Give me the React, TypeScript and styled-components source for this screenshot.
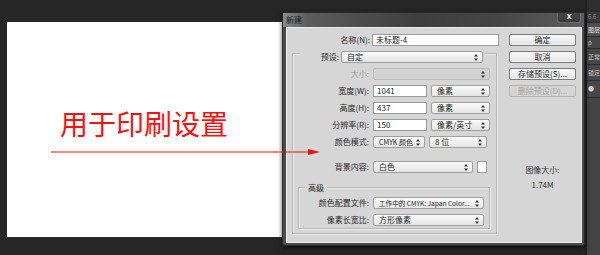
import React from "react";
import styled, { createGlobalStyle } from "styled-components";

const GlobalStyle = createGlobalStyle`
  html, body {
    margin: 0;
    padding: 0;
    background: #262626;
  }
  body {
    font-family: "Noto Sans CJK SC", "DejaVu Sans", sans-serif;
  }
`;

const Screen = styled.div`
  position: relative;
  width: 600px;
  height: 255px;
  display: flex;
  overflow: hidden;
  background: #262626;
`;

const Workspace = styled.div`
  flex: 1;
  padding: 22px 0 0 7px;
`;

const Canvas = styled.div`
  width: 300px;
  height: 215px;
  box-sizing: border-box;
  background: #fff;
  padding: 86px 0 0 53px;
`;

const Caption = styled.div`
  font-size: 28px;
  line-height: 30px;
  color: #ff1010;
  font-weight: 400;
  white-space: nowrap;
`;

const Arrow = styled.svg`
  position: absolute;
  left: 51px;
  top: 148px;
`;

const Dialog = styled.div`
  position: absolute;
  left: 282px;
  top: 12px;
  width: 303px;
  height: 234px;
  box-sizing: border-box;
  display: flex;
  flex-direction: column;
  background: #4b4b4b;
  border: 1px solid #2a2a2a;
  border-radius: 3px 3px 2px 2px;
  padding: 0 2px 2px 3px;
  box-shadow: 0 2px 5px rgba(0, 0, 0, 0.6);
`;

const TitleBar = styled.div`
  height: 14px;
  display: flex;
  align-items: flex-start;
  justify-content: space-between;
  margin: 0 -2px 0 -3px;
  padding-left: 3px;
  background: linear-gradient(90deg, #8a8a8a 0%, #5c5c5c 8%, #3e3e3e 45%, #454545 70%, #5e5e5e 100%);
`;

const TitleText = styled.span`
  font-size: 8px;
  line-height: 12px;
  margin-top: 1px;
  color: #1c1c1c;
`;

const CloseButton = styled.div`
  width: 24px;
  height: 10px;
  margin-right: 3px;
  box-sizing: border-box;
  border: 1px solid #6a6a6a;
  border-top: none;
  border-radius: 0 0 3px 3px;
  background: linear-gradient(#474747, #3a3a3a);
  color: #e8e8e8;
  font-family: "DejaVu Sans", sans-serif;
  font-weight: bold;
  font-size: 8px;
  line-height: 8px;
  text-align: center;
`;

const Body = styled.div`
  flex: 1;
  display: flex;
  box-sizing: border-box;
  padding: 6px 0 0 5px;
  background: #d6d6d6;
  border: 1px solid #ededed;
`;

const FormColumn = styled.div`
  width: 207px;
  display: flex;
  flex-direction: column;
`;

const SideColumn = styled.div`
  width: 67px;
  margin-left: 10px;
  display: flex;
  flex-direction: column;
  gap: 5px;
`;

const FieldRow = styled.div<{ $label: number; $gap?: number }>`
  display: grid;
  grid-template-columns: ${(p) => p.$label}px 1fr;
  column-gap: ${(p) => p.$gap ?? 4}px;
  align-items: center;
`;

const Label = styled.span<{ $disabled?: boolean }>`
  font-size: 8px;
  line-height: 12px;
  text-align: right;
  white-space: nowrap;
  color: ${(p) => (p.$disabled ? "#9c9c9c" : "#2a2a2a")};
`;

const Controls = styled.div`
  display: flex;
  gap: 4px;
  align-items: center;
`;

const TextInput = styled.div<{ $w: number }>`
  width: ${(p) => p.$w}px;
  height: 12px;
  box-sizing: border-box;
  background: #fff;
  border: 1px solid #9a9a9a;
  padding-left: 3px;
  font-size: 8px;
  line-height: 10px;
  color: #1e1e1e;
`;

const SelectBox = styled.div<{ $w: number; $disabled?: boolean; $fs?: number }>`
  position: relative;
  width: ${(p) => p.$w}px;
  height: 12px;
  box-sizing: border-box;
  border: 1px solid ${(p) => (p.$disabled ? "#bcbcbc" : "#9e9e9e")};
  border-radius: 2px;
  background: ${(p) =>
    p.$disabled ? "#d2d2d2" : "linear-gradient(#fbfbfb, #e4e4e4)"};
  padding-left: 5px;
  font-size: ${(p) => p.$fs ?? 8}px;
  line-height: 10px;
  color: #1e1e1e;
  white-space: nowrap;
`;

const Updown = styled.svg`
  position: absolute;
  right: 4px;
  top: 2px;
`;

const Swatch = styled.div`
  width: 8px;
  height: 10px;
  background: #fff;
  border: 1px solid #9a9a9a;
`;

const GroupBox = styled.div`
  margin-top: 7px;
  width: 205px;
  box-sizing: border-box;
  border: 1px solid #b6b6b6;
  box-shadow: inset 1px 1px 0 #ececec, 1px 1px 0 #ececec;
  padding: 0 0 4px 0;
  display: flex;
  flex-direction: column;
`;

const PresetRow = styled.div`
  margin: -3px 0 0 7px;
  padding: 0 2px;
  width: max-content;
  display: grid;
  grid-template-columns: 37px 142px;
  column-gap: 2px;
  align-items: center;
  background: #d6d6d6;
`;

const Stack = styled.div<{ $top: number }>`
  display: flex;
  flex-direction: column;
  gap: 5px;
  margin-top: ${(p) => p.$top}px;
`;

const AdvancedBox = styled.div`
  margin: 14px 0 0 5px;
  width: 192px;
  box-sizing: border-box;
  border: 1px solid #b6b6b6;
  box-shadow: inset 1px 1px 0 #ececec, 1px 1px 0 #ececec;
  padding-bottom: 2px;
`;

const Legend = styled.div`
  margin: -6px 0 0 6px;
  padding: 0 3px;
  width: max-content;
  background: #d6d6d6;
  font-size: 8px;
  line-height: 11px;
  color: #2a2a2a;
`;

const Button = styled.div<{ $disabled?: boolean }>`
  height: 12px;
  box-sizing: border-box;
  border: 1px solid ${(p) => (p.$disabled ? "#b4b4b4" : "#7a7a7a")};
  border-radius: 2px;
  background: ${(p) =>
    p.$disabled ? "#d4d4d4" : "linear-gradient(#fcfcfc, #e2e2e2)"};
  box-shadow: ${(p) => (p.$disabled ? "none" : "inset 0 0 0 1px #f4f4f4")};
  font-size: 8px;
  line-height: 10px;
  text-align: center;
  color: ${(p) => (p.$disabled ? "#a6a6a6" : "#222")};
  white-space: nowrap;
`;

const ImageSize = styled.div`
  margin-top: 60px;
  text-align: center;
  font-size: 8px;
  line-height: 15px;
  color: #333;
`;

const RightPanel = styled.div`
  width: 13px;
  border-left: 2px solid #1f1f1f;
  background: #444;
  display: flex;
  flex-direction: column;
  overflow: hidden;
`;

const PanelCell = styled.div<{ $h: number; $bg: string; $color?: string }>`
  height: ${(p) => p.$h}px;
  background: ${(p) => p.$bg};
  border-bottom: 1px solid #2c2c2c;
  color: ${(p) => p.$color ?? "#cfcfcf"};
  font-size: 6px;
  line-height: ${(p) => p.$h}px;
  padding-left: 1px;
  white-space: nowrap;
  overflow: hidden;
`;

const Spin = () => (
  <Updown width="4" height="7" viewBox="0 0 4 7">
    <path d="M2 0 L4 2.5 L0 2.5 Z M2 7 L4 4.5 L0 4.5 Z" fill="#333" />
  </Updown>
);

type SelectProps = { w: number; text?: string; disabled?: boolean; fs?: number };

const Select = ({ w, text, disabled, fs }: SelectProps) => (
  <SelectBox $w={w} $disabled={disabled} $fs={fs}>
    {text}
    <Spin />
  </SelectBox>
);

export default function App() {
  return (
    <Screen>
      <GlobalStyle />
      <Workspace>
        <Canvas>
          <Caption>用于印刷设置</Caption>
        </Canvas>
      </Workspace>

      <Dialog>
        <TitleBar>
          <TitleText>新建</TitleText>
          <CloseButton>x</CloseButton>
        </TitleBar>
        <Body>
          <FormColumn>
            <FieldRow $label={78} $gap={2}>
              <Label>名称(N):</Label>
              <TextInput $w={127}>未标题-4</TextInput>
            </FieldRow>

            <GroupBox>
              <PresetRow>
                <Label>预设:</Label>
                <Select w={142} text="自定" />
              </PresetRow>

              <Stack $top={5}>
                <FieldRow $label={76}>
                  <Label $disabled>大小:</Label>
                  <Select w={117} disabled />
                </FieldRow>
                <FieldRow $label={76}>
                  <Label>宽度(W):</Label>
                  <Controls>
                    <TextInput $w={54}>1041</TextInput>
                    <Select w={59} text="像素" />
                  </Controls>
                </FieldRow>
                <FieldRow $label={76}>
                  <Label>高度(H):</Label>
                  <Controls>
                    <TextInput $w={54}>437</TextInput>
                    <Select w={59} text="像素" />
                  </Controls>
                </FieldRow>
                <FieldRow $label={76}>
                  <Label>分辨率(R):</Label>
                  <Controls>
                    <TextInput $w={54}>150</TextInput>
                    <Select w={59} text="像素/英寸" />
                  </Controls>
                </FieldRow>
                <FieldRow $label={76}>
                  <Label>颜色模式:</Label>
                  <Controls>
                    <Select w={52} text="CMYK 颜色" fs={7} />
                    <Select w={58} text="8 位" />
                  </Controls>
                </FieldRow>
              </Stack>

              <Stack $top={13}>
                <FieldRow $label={76}>
                  <Label>背景内容:</Label>
                  <Controls>
                    <Select w={100} text="白色" />
                    <Swatch />
                  </Controls>
                </FieldRow>
              </Stack>

              <AdvancedBox>
                <Legend>高级</Legend>
                <Stack $top={4}>
                  <FieldRow $label={70}>
                    <Label>颜色配置文件:</Label>
                    <Select w={111} text="工作中的 CMYK: Japan Color..." fs={6.6} />
                  </FieldRow>
                  <FieldRow $label={70}>
                    <Label>像素长宽比:</Label>
                    <Select w={111} text="方形像素" />
                  </FieldRow>
                </Stack>
              </AdvancedBox>
            </GroupBox>
          </FormColumn>

          <SideColumn>
            <Button>确定</Button>
            <Button>取消</Button>
            <Button>存储预设(S)...</Button>
            <Button $disabled>删除预设(D)...</Button>
            <ImageSize>
              图像大小:
              <br />
              1.74M
            </ImageSize>
          </SideColumn>
        </Body>
      </Dialog>

      <Arrow width="270" height="9" viewBox="0 0 270 9">
        <line x1="0" y1="4" x2="259" y2="4" stroke="#ee1111" strokeWidth="1.2" />
        <path d="M257 1 L269 4 L257 7 Z" fill="#ee1111" />
      </Arrow>

      <RightPanel>
        <PanelCell $h={11} $bg="#2e2e2e" />
        <PanelCell $h={10} $bg="#3a3a3a" $color="#8a8a8a">6.6</PanelCell>
        <PanelCell $h={13} $bg="#505050" $color="#e0e0e0">图层</PanelCell>
        <PanelCell $h={11} $bg="#474747">ρ</PanelCell>
        <PanelCell $h={15} $bg="#474747">正常</PanelCell>
        <PanelCell $h={15} $bg="#474747">锁定</PanelCell>
        <PanelCell $h={16} $bg="#474747">●</PanelCell>
      </RightPanel>
    </Screen>
  );
}
